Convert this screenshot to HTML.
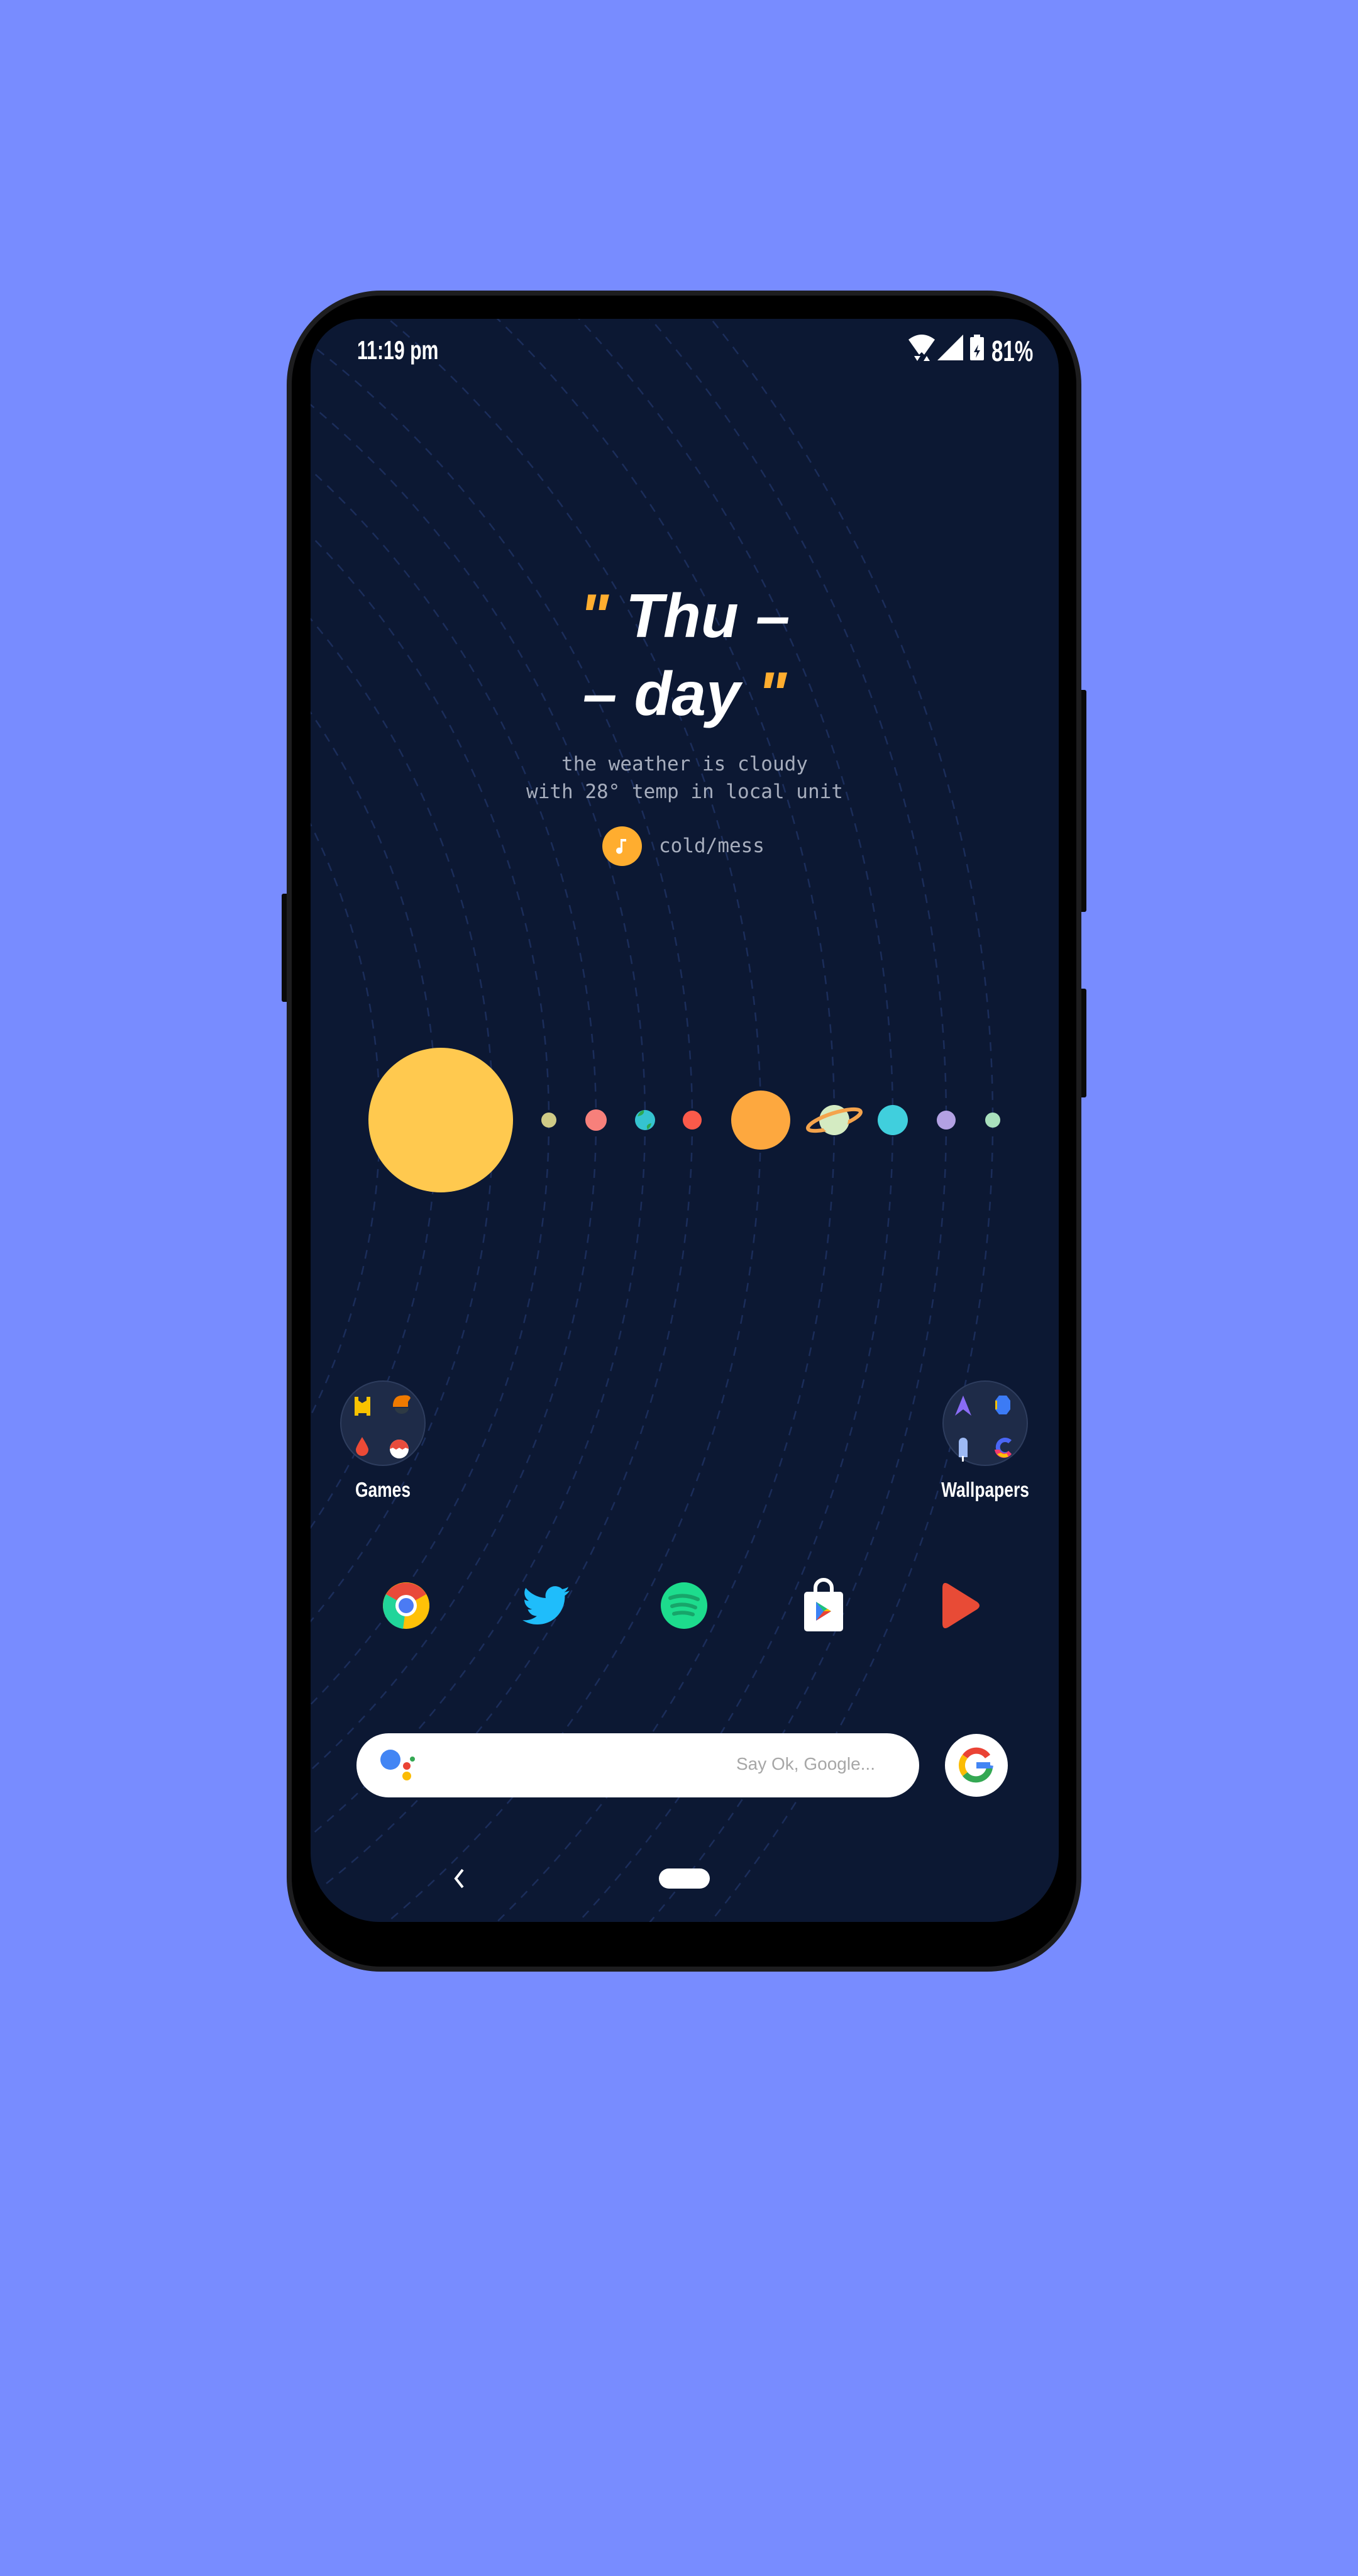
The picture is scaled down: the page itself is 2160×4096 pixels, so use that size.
<!DOCTYPE html>
<html><head><meta charset="utf-8"><style>
*{margin:0;padding:0;box-sizing:border-box}
html,body{width:2160px;height:4096px;background:#788cff;overflow:hidden;font-family:"Liberation Sans",sans-serif}
.abs{position:absolute}
.phone{left:456px;top:462px;width:1264px;height:2673px;background:#000;border:8px solid #1d1d1f;border-radius:150px}
.screen{left:494px;top:507px;width:1190px;height:2549px;background:#0c1833;border-radius:80px 80px 110px 110px;overflow:hidden}
.btn{background:#0a0a0a;width:12px;border-radius:3px}
.q{color:#ffad2f}
.big{width:1190px;text-align:center;color:#fff;font-weight:bold;font-style:italic;font-size:98px;line-height:124px}
.mono{font-family:"DejaVu Sans Mono","Liberation Mono",monospace;color:#a6adbd;font-size:31px}
.lbl{color:#fff;font-weight:bold;font-size:33px;transform:scaleX(.8);text-align:center;width:240px}
</style></head><body>
<div class="abs btn" style="left:1716px;top:1097px;height:353px"></div>
<div class="abs btn" style="left:1716px;top:1572px;height:173px"></div>
<div class="abs btn" style="left:448px;top:1421px;height:172px"></div>
<div class="abs phone"></div>
<div class="abs screen">
<svg class="abs" style="left:0;top:0" width="1190" height="2549">
<g fill="none" stroke="#1b2d5a" stroke-width="2.5" stroke-dasharray="14 12">
<circle cx="-950" cy="1274" r="1329"/><circle cx="-950" cy="1274" r="1404"/><circle cx="-950" cy="1274" r="1482"/><circle cx="-950" cy="1274" r="1557"/><circle cx="-950" cy="1274" r="1666"/><circle cx="-950" cy="1274" r="1783"/><circle cx="-950" cy="1274" r="1876"/><circle cx="-950" cy="1274" r="1961"/><circle cx="-950" cy="1274" r="2035"/><circle cx="-950" cy="1274" r="1240"/><circle cx="-950" cy="1274" r="1150"/><circle cx="-950" cy="1274" r="1060"/>
</g>
<circle cx="207" cy="1274" r="115" fill="#ffc94f"/>
<circle cx="379" cy="1274" r="12" fill="#cfca86"/>
<circle cx="454" cy="1274" r="17" fill="#f7807b"/>
<circle cx="532" cy="1274" r="16" fill="#35c3d0"/>
<path d="M520 1268a16 16 0 0 1 10-10q2 8-10 10z M536 1289q-4-8 6-10a16 16 0 0 1-6 10z" fill="#2ea84f"/>
<circle cx="607" cy="1274" r="15" fill="#fb5a4a"/>
<circle cx="716" cy="1274" r="47" fill="#fda83f"/>
<circle cx="833" cy="1274" r="24" fill="#d4ebc2"/>
<ellipse cx="833" cy="1274" rx="44" ry="11" transform="rotate(-18 833 1274)" fill="none" stroke="#f4a34c" stroke-width="6"/>
<path d="M811 1274a22 22 0 0 0 44 0" fill="#d4ebc2" transform="rotate(-18 833 1274)"/>
<circle cx="926" cy="1274" r="24" fill="#40cfdd"/>
<circle cx="1011" cy="1274" r="15" fill="#b3a1e3"/>
<circle cx="1085" cy="1274" r="12" fill="#a9e0bd"/>
</svg>
<div class="abs" style="left:74px;top:26px;color:#fff;font-weight:bold;font-size:42px;transform:scaleX(.72);transform-origin:left">11:19 pm</div>
<svg class="abs" style="left:951px;top:21px" width="200" height="50">
<path d="M0 12 Q21 -4 42 12 L25 36 L21 32 L17 36 Z" fill="#fff"/>
<path d="M9 38 h10 l-5 8z M24 46 l5-8 5 8z" fill="#fff"/>
<path d="M46 45 L87 4 V45 Z" fill="#fff"/>
<rect x="98" y="8" width="22" height="37" rx="2" fill="#fff"/><rect x="104" y="4" width="10" height="5" fill="#fff"/>
<path d="M111 20 l-7 12 h5 l-2 9 7-12 h-5z" fill="#0c1833"/>
</svg>
<div class="abs" style="left:1083px;top:24px;color:#fff;font-weight:bold;font-size:46px;transform:scaleX(.72);transform-origin:left">81%</div>
<div class="abs big" style="left:0;top:410px"><span class="q">"</span> Thu –</div>
<div class="abs big" style="left:0;top:534px">– day <span class="q">"</span></div>
<div class="abs mono" style="left:0;top:686px;width:1190px;text-align:center;line-height:44px">the weather is cloudy<br>with 28° temp in local unit</div>
<div class="abs" style="left:464px;top:807px;width:63px;height:63px;border-radius:50%;background:#ffad2f"></div>
<svg class="abs" style="left:464px;top:807px" width="63" height="63"><path d="M32 20 v18 a5 5 0 1 1 -3 -4 v-14 h9 v4 h-6z" fill="#fff"/></svg>
<div class="abs mono" style="left:554px;top:820px">cold/mess</div>
<div class="abs" style="left:47px;top:1688px;width:136px;height:136px;border-radius:50%;background:#1e2b48;border:2px solid #2e3d5e"></div>
<svg class="abs" style="left:47px;top:1688px" width="136" height="136">
<path d="M23 26h6v30h-6z M42 26h6v30h-6z M29 32l6 4 7-4v20h-13z" fill="#f8c200"/>
<path d="M84 38 q2-14 14-14 q12-2 14 4 l-4 6 v8 h-24z" fill="#ef7a00"/><path d="M87 44h22a11 9 0 0 1-22 0z" fill="#2e3a44"/>
<path d="M35 90 q-10 16 -10 20 a10 10 0 0 0 20 0 q0-4-10-20z" fill="#eb4a36"/>
<circle cx="94" cy="109" r="15" fill="#fff"/><path d="M79 109a15 15 0 0 1 30 0 l-5 -2-5 3-5-3-5 3-5-3z" fill="#e84c3d"/>
</svg>
<div class="abs lbl" style="left:-5px;top:1843px">Games</div>
<div class="abs" style="left:1005px;top:1688px;width:136px;height:136px;border-radius:50%;background:#1e2b48;border:2px solid #2e3d5e"></div>
<svg class="abs" style="left:1005px;top:1688px" width="136" height="136">
<path d="M20 56 L33 24 L46 56 L33 46Z" fill="#8a6cf6"/>
<path d="M90 24h12l6 8v14l-6 8h-12l-6-8v-14z" fill="#3c7bf5"/><path d="M84 32v14h3v-14z" fill="#f5c000"/>
<path d="M26 122 v-24 a7 7 0 0 1 14 0 v24z" fill="#9db9f3"/><rect x="31" y="120" width="3" height="9" fill="#fff"/>
<path d="M110 95 a15 15 0 1 0 0 22 l-5-5 a8 8 0 1 1 0-12z" fill="#4a66f5"/><path d="M83 110 a15 15 0 0 0 27 7 l-5-5 a8 8 0 0 1-14-2z" fill="#f23b6d"/><path d="M87 117 a15 15 0 0 0 18 4 l-3-5 a8 8 0 0 1-9-1z" fill="#ffc107"/>
</svg>
<div class="abs lbl" style="left:953px;top:1843px">Wallpapers</div>
<svg class="abs" style="left:0;top:1990px" width="1190" height="110">
<g transform="translate(152,56)">
<circle r="37" fill="#ffc107"/><path d="M0 0 L-32 -18 A37 37 0 0 1 32 -18Z" fill="#e94a3a"/><path d="M0 0 L-32 -18 A37 37 0 0 0 -5 37Z" fill="#21d59a"/><path d="M0 0 L32 -18 A37 37 0 0 1 30 22 Z" fill="#ffc107"/>
<circle r="17" fill="#fff"/><circle r="12" fill="#4b7bf4"/></g>
<g transform="translate(334,16) scale(3.3)"><path d="M23.643 4.937c-.835.37-1.732.62-2.675.733.962-.576 1.7-1.49 2.048-2.578-.9.534-1.897.922-2.958 1.130-.85-.904-2.060-1.470-3.400-1.470-2.572 0-4.658 2.086-4.658 4.660 0 .364.042.718.120 1.060-3.873-.195-7.304-2.050-9.602-4.868-.4.690-.630 1.490-.630 2.342 0 1.616.823 3.043 2.072 3.878-.764-.025-1.482-.234-2.110-.583v.060c0 2.257 1.605 4.140 3.737 4.568-.392.106-.803.162-1.227.162-.3 0-.593-.028-.877-.082.593 1.850 2.313 3.198 4.352 3.234-1.595 1.250-3.604 1.995-5.786 1.995-.376 0-.747-.022-1.112-.065 2.062 1.323 4.510 2.093 7.140 2.093 8.570 0 13.255-7.098 13.255-13.254 0-.2-.005-.402-.014-.602.910-.658 1.700-1.477 2.323-2.410z" fill="#1fbdfb"/></g>
<circle cx="594" cy="56" r="37" fill="#1ddc8d"/>
<g fill="none" stroke="#17a56a" stroke-width="6" stroke-linecap="round"><path d="M572 44 q22-8 44 2"/><path d="M575 57 q19-6 37 2"/><path d="M578 69 q15-4 30 1"/></g>
<path d="M803 36 v-8 a13 13 0 0 1 26 0 v8" fill="none" stroke="#fff" stroke-width="6"/>
<path d="M790 34h52a5 5 0 0 1 5 5v53a5 5 0 0 1-5 5h-52a5 5 0 0 1-5-5v-53a5 5 0 0 1 5-5z" fill="#fff"/>
<path d="M804 50 l24 15 -24 15z" fill="#3b82f5"/><path d="M804 50 l12 15 12 0z" fill="#1ec27a"/><path d="M804 80 l12-15 12 0z" fill="#ea4335"/><path d="M816 65 h12 l-6-4z" fill="#fbbc05"/>
<path d="M1005 28 Q1005 16 1015 22 L1060 50 Q1068 56 1060 62 L1015 90 Q1005 96 1005 84 Z" fill="#e84b36"/>
</svg>
<div class="abs" style="left:73px;top:2249px;width:895px;height:102px;border-radius:51px;background:#fff"></div>
<svg class="abs" style="left:73px;top:2249px" width="120" height="102"><circle cx="54" cy="42" r="16" fill="#4285f4"/><circle cx="80" cy="52" r="6" fill="#ea4335"/><circle cx="80" cy="68" r="7" fill="#fbbc05"/><circle cx="89" cy="41" r="4" fill="#34a853"/></svg>
<div class="abs" style="left:600px;top:2282px;width:298px;text-align:right;color:#a7a7a7;font-size:28px">Say Ok, Google...</div>
<div class="abs" style="left:1009px;top:2250px;width:100px;height:100px;border-radius:50%;background:#fff"></div>
<svg class="abs" style="left:1009px;top:2250px" width="100" height="100"><g fill="none" stroke-width="10"><path d="M68 36 A22 22 0 0 0 32 36" stroke="#ea4335"/><path d="M32 36 A22 22 0 0 0 32 64" stroke="#fbbc05"/><path d="M32 64 A22 22 0 0 0 71 54" stroke="#34a853"/><path d="M72 50 H50" stroke="#4285f4"/><path d="M71 54 A22 22 0 0 0 72 50" stroke="#4285f4"/></g></svg>
<svg class="abs" style="left:222px;top:2460px" width="30" height="40"><path d="M20 6 L9 20 L20 34" fill="none" stroke="#fff" stroke-width="4"/></svg>
<div class="abs" style="left:554px;top:2464px;width:81px;height:32px;border-radius:16px;background:#fff"></div>
</div>
</body></html>
